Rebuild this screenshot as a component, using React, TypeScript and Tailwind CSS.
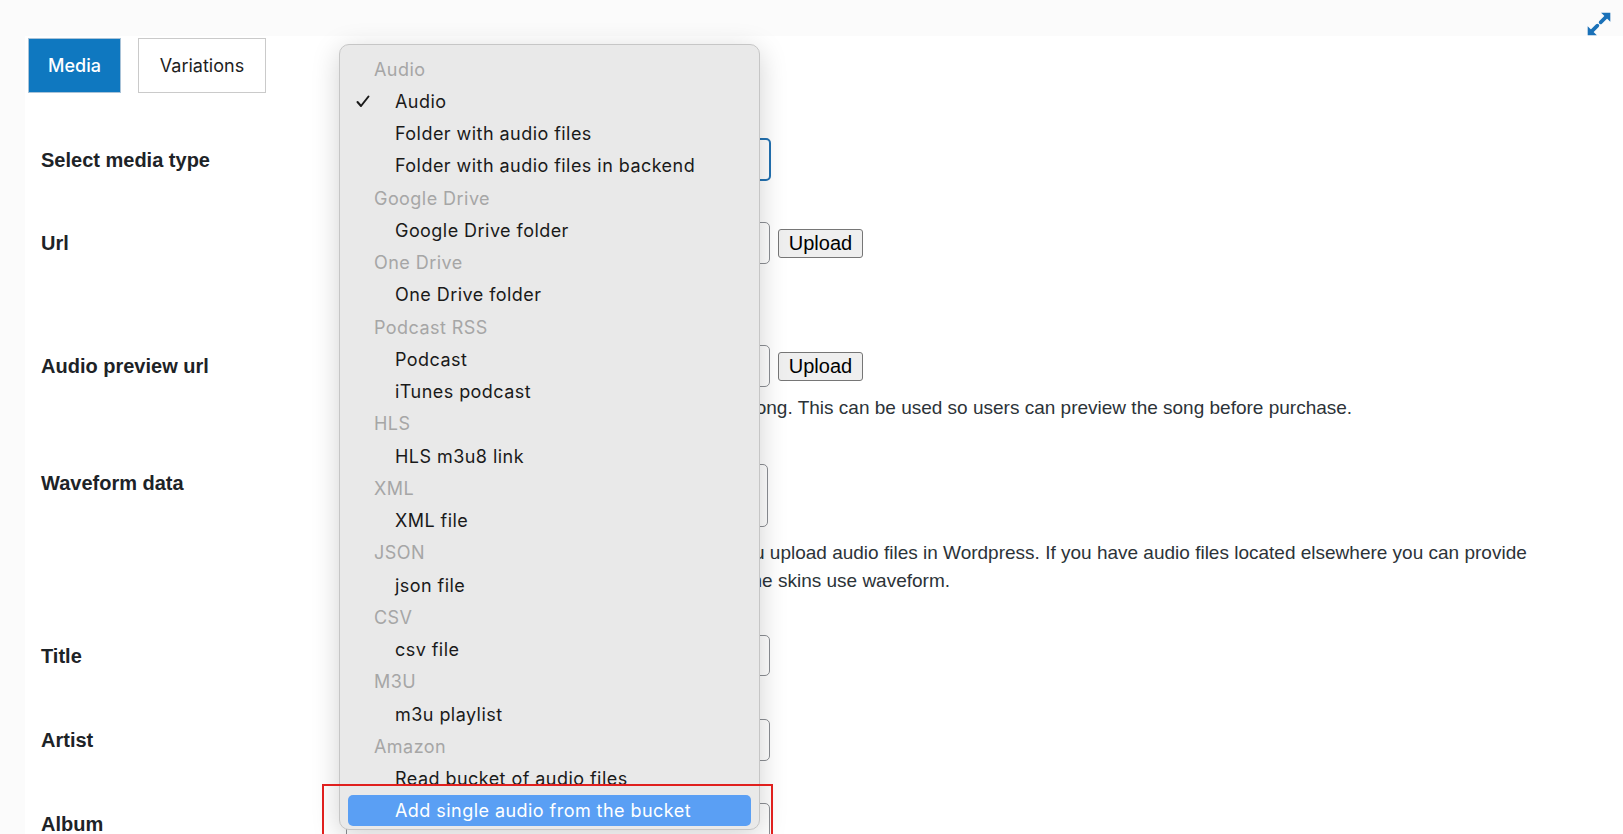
import React from "react";

type MenuItem = { label: string; header?: boolean; checked?: boolean; active?: boolean };

const menu: MenuItem[] = [
  { label: "Audio", header: true },
  { label: "Audio", checked: true },
  { label: "Folder with audio files" },
  { label: "Folder with audio files in backend" },
  { label: "Google Drive", header: true },
  { label: "Google Drive folder" },
  { label: "One Drive", header: true },
  { label: "One Drive folder" },
  { label: "Podcast RSS", header: true },
  { label: "Podcast" },
  { label: "iTunes podcast" },
  { label: "HLS", header: true },
  { label: "HLS m3u8 link" },
  { label: "XML", header: true },
  { label: "XML file" },
  { label: "JSON", header: true },
  { label: "json file" },
  { label: "CSV", header: true },
  { label: "csv file" },
  { label: "M3U", header: true },
  { label: "m3u playlist" },
  { label: "Amazon", header: true },
  { label: "Read bucket of audio files" },
  { label: "Add single audio from the bucket", active: true },
];

function Label({ children, className = "" }: { children: React.ReactNode; className?: string }) {
  return (
    <div className={"w-[305px] shrink-0 font-['Liberation_Sans',Arial,sans-serif] text-[20px] font-bold leading-[22px] text-[#1d2327] " + className}>
      {children}
    </div>
  );
}

function UploadButton() {
  return (
    <button className="ml-[8px] h-[29px] w-[85px] rounded-[3px] border border-[#767676] bg-[#efefef] font-['Liberation_Sans',Arial,sans-serif] text-[20px] leading-none text-black">
      Upload
    </button>
  );
}

function TextInput() {
  return <div className="h-[42px] w-[424px] rounded-[5px] border border-[#8c8f94] bg-white" />;
}

export default function App() {
  return (
    <div className="relative h-[834px] w-[1623px] overflow-hidden bg-[#fbfbfb] font-['Liberation_Sans',Arial,sans-serif]">
      {/* top bar with expand icon */}
      <div className="flex h-[36px] justify-end pr-[10px] pt-[10px]">
        <svg width="28" height="28" viewBox="0 0 26 26" fill="none">
          <path d="M14.5 11.5 L21 5" stroke="#1a71b8" strokeWidth="3.4" strokeLinecap="round" />
          <path d="M15 2.5 H23.5 V11 Z" fill="#1a71b8" />
          <path d="M11.5 14.5 L5 21" stroke="#1a71b8" strokeWidth="3.4" strokeLinecap="round" />
          <path d="M2.5 15 V23.5 H11 Z" fill="#1a71b8" />
        </svg>
      </div>

      <div className="ml-[25px] h-full bg-white pl-[16px] pt-[2px]">
        {/* tabs */}
        <div className="-ml-[13px] flex gap-[17px]">
          <button className="h-[55px] w-[93px] border border-[#a9c3d8] bg-[#0f78c0] font-['Inter',sans-serif] text-[18px] font-medium text-white">
            Media
          </button>
          <button className="h-[55px] w-[128px] border border-[#cacaca] bg-white font-['Inter',sans-serif] text-[18px] text-[#1e1e1e]">
            Variations
          </button>
        </div>

        {/* select media type */}
        <div className="mt-[45px] flex h-[43px] items-center">
          <Label>Select media type</Label>
          <div className="h-[43px] w-[425px] rounded-[5px] border-2 border-[#2271b1] bg-white" />
        </div>

        {/* url */}
        <div className="mt-[41px] flex items-center">
          <Label>Url</Label>
          <TextInput />
          <UploadButton />
        </div>

        {/* audio preview */}
        <div className="mt-[81px] flex items-start">
          <Label className="pt-[10px]">Audio preview url</Label>
          <div>
            <div className="flex items-center">
              <TextInput />
              <UploadButton />
            </div>
            <p className="mt-[7px] whitespace-nowrap text-[19px] leading-[28px] text-[#2c3338]">
              Audio preview url for a shorter version of its full song. This can be used so users can preview the song before purchase.
            </p>
          </div>
        </div>

        {/* waveform */}
        <div className="mt-[42px] flex items-start">
          <Label className="pt-[8px]">Waveform data</Label>
          <div>
            <div className="h-[63px] w-[422px] rounded-[5px] border border-[#8c8f94] bg-white" />
            <p className="mt-[12px] whitespace-nowrap text-[19px] leading-[28px] text-[#2c3338]">
              Waveform data is created automatically when you upload audio files in Wordpress. If you have audio files located elsewhere you can provide
              <br />
              waveform data as an array of numbers. Only some skins use waveform.
            </p>
          </div>
        </div>

        <div className="mt-[40px] flex items-center">
          <Label>Title</Label>
          <div className="h-[41px] w-[424px] rounded-[5px] border border-[#8c8f94] bg-white" />
        </div>
        <div className="mt-[43px] flex items-center">
          <Label>Artist</Label>
          <TextInput />
        </div>
        <div className="mt-[42px] flex items-center">
          <Label>Album</Label>
          <TextInput />
        </div>
      </div>

      {/* native select popup */}
      <div className="absolute left-[339px] top-[44px] h-[786px] w-[421px] rounded-[10px] border border-[#c6c6c6] bg-[#e9e9e9] pt-[8px] font-['Inter',sans-serif] shadow-[0_6px_28px_rgba(0,0,0,0.18)]">
        {menu.map((m, i) => (
          <div key={i} className="flex h-[32.25px] items-center px-[8px]">
            <div
              className={
                "flex h-[31px] w-full items-center rounded-[5px] text-[18px] tracking-[0.45px] " +
                (m.active ? "bg-[#5a9ff4] text-white" : m.header ? "text-[#a6a6a6]" : "text-[#1a1a1a]")
              }
            >
              <span className="flex w-[47px] shrink-0 items-center pl-[8px]">
                {m.checked && (
                  <svg width="14" height="13" viewBox="0 0 14 13" fill="none">
                    <path d="M1.5 7 L5 11 L12.5 1.5" stroke="#1a1a1a" strokeWidth="2" strokeLinecap="round" strokeLinejoin="round" />
                  </svg>
                )}
              </span>
              <span className={m.header ? "-ml-[21px]" : ""}>{m.label}</span>
            </div>
          </div>
        ))}
      </div>

      {/* annotation box */}
      <div className="absolute left-[322px] top-[784px] h-[52px] w-[451px] border-2 border-[#e0201e]" />
    </div>
  );
}
